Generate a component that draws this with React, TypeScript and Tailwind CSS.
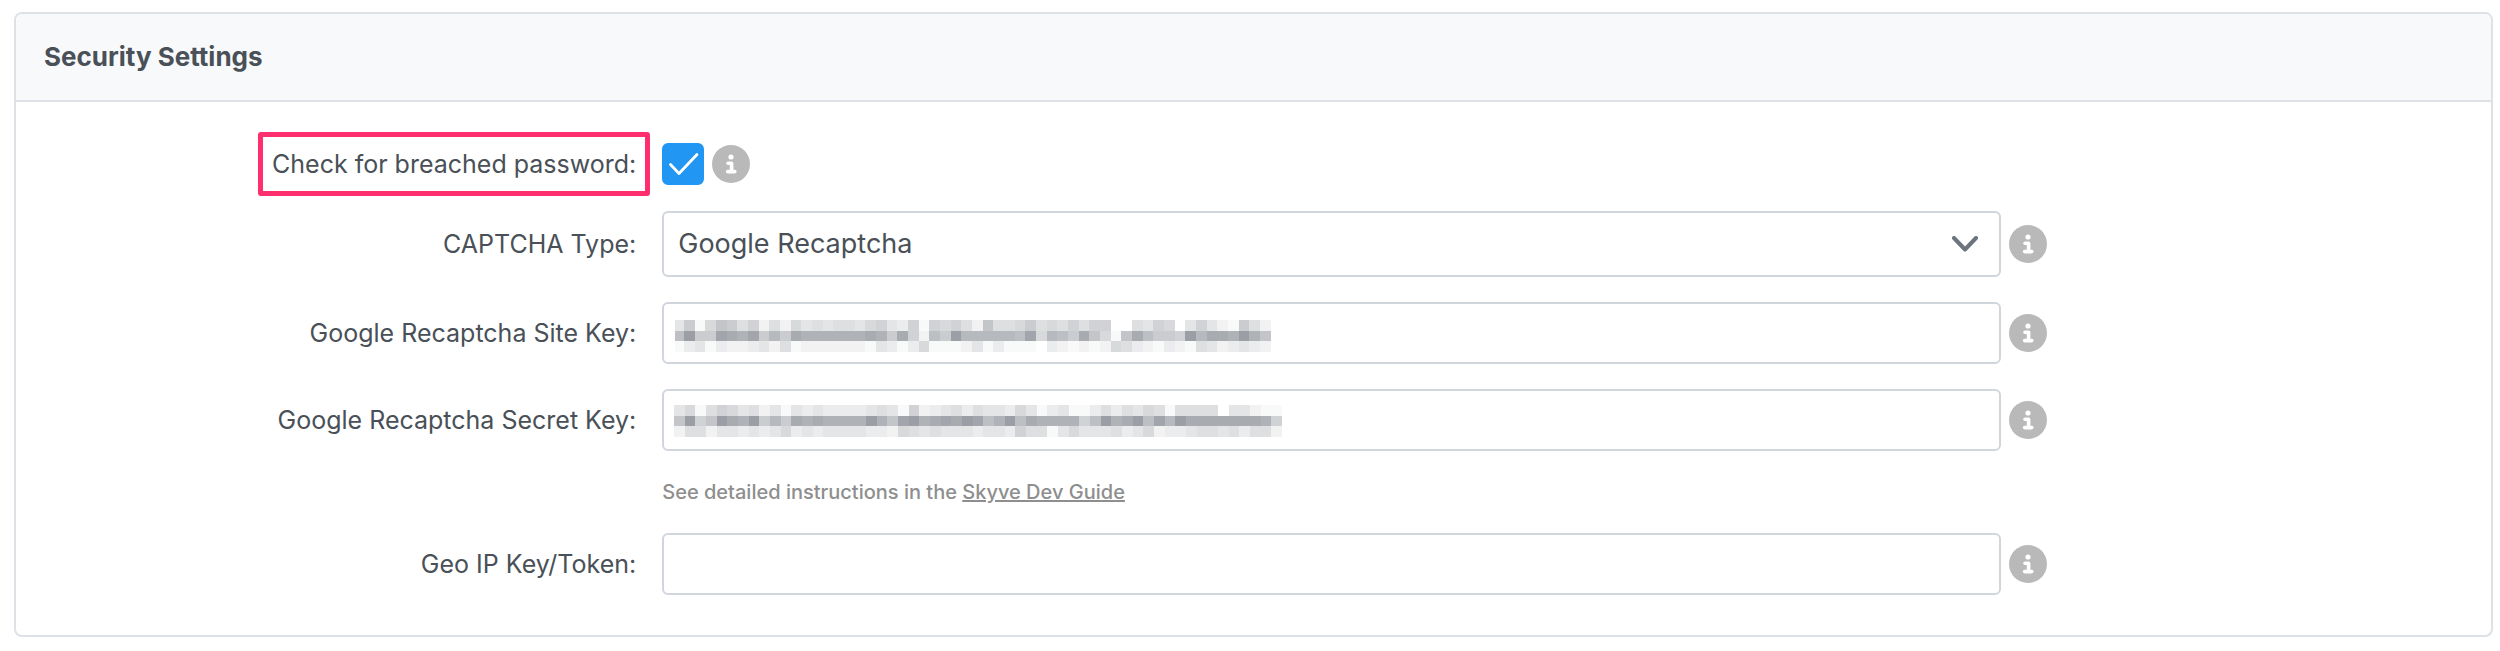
import { useState } from 'react'
import type { ReactNode } from 'react'

const CELL = 32 / 3

// One hex digit per cell: 0 is blank, f is the darkest
const SITE_KEY_MASK = [
  '48169857252645455467437176752955685657577005476047421852',
  'af88edce8b8dccccccdc8d72a8fbbbbbae6ba8d9619da887fbddcfc9',
  '13413223425122222214313611124131110321212653213215423432',
]

const SECRET_KEY_MASK = [
  '461576452414343333454172345354436413411353546515555044211',
  '9f79fdcf8b8dcdccccfc9efcdedfeacfadcccc7afcdfaebfdddddddc7',
  '255244343463434444332654544434437551464445346233455453552',
]

interface MaskedValueProps {
  rows: string[]
  top: number
  firstCell: number
}

function MaskedValue({ rows, top, firstCell }: MaskedValueProps) {
  const width = firstCell + (rows[0].length - 1) * CELL
  return (
    <svg
      className="pointer-events-none absolute h-8"
      style={{ top, left: 22 - firstCell, width }}
      viewBox={`0 0 ${width} 32`}
      shapeRendering="crispEdges"
      aria-hidden="true"
    >
      {rows.map((row, y) =>
        row.split('').map((level, x) => (
          <rect
            key={`${x}-${y}`}
            x={x === 0 ? 0 : firstCell + (x - 1) * CELL}
            y={y * CELL}
            width={x === 0 ? firstCell : CELL}
            height={CELL}
            fill="#9b9fa5"
            fillOpacity={parseInt(level, 16) / 15}
          />
        ))
      )}
    </svg>
  )
}

function InfoButton({ label }: { label: string }) {
  return (
    <button type="button" aria-label={`About ${label}`} className="shrink-0">
      <svg className="size-[38px]" viewBox="0 0 38 38" fill="none" aria-hidden="true">
        <circle cx="19" cy="19" r="19" fill="#b9b9b9" />
        <circle cx="19" cy="12" r="2.6" fill="#fff" />
        <path
          d="M16 18.3h3.6v8.3M15.6 26.6h7.2"
          stroke="#fff"
          strokeWidth="3.6"
          strokeLinecap="round"
          strokeLinejoin="round"
        />
      </svg>
    </button>
  )
}

interface FieldRowProps {
  id: string
  label: string
  highlighted?: boolean
  children: ReactNode
}

function FieldRow({ id, label, highlighted, children }: FieldRowProps) {
  return (
    <div className="flex items-center gap-[26px]">
      <div className="flex w-1/4 justify-end">
        <label htmlFor={id} className="relative text-[25px] leading-8">
          {label}:
          {highlighted && (
            <span className="pointer-events-none absolute -inset-x-[14px] -inset-y-4 rounded-[3px] border-5 border-[#ff2e6c]" />
          )}
        </label>
      </div>
      <div className="flex w-[56%] items-center gap-2">
        {children}
        <InfoButton label={label} />
      </div>
    </div>
  )
}

const inputClass =
  'block h-[62px] w-full rounded-md border-2 border-[#d0d6dc] bg-white px-4 text-[27px] outline-none'

export default function App() {
  const [breachCheck, setBreachCheck] = useState(true)
  const [captchaType, setCaptchaType] = useState('Google Recaptcha')
  const [geoKey, setGeoKey] = useState('')

  return (
    <main className="bg-white pt-3 pr-[7px] pb-[14px] pl-[14px] font-[Inter,sans-serif] text-[#495057]">
      <section className="overflow-hidden rounded-lg border-2 border-[#dee2e6]">
        <header className="border-b-2 border-[#dee2e6] bg-[#f8f9fb] px-7 py-[27px]">
          <h2 className="text-[26px] leading-8 font-bold">Security Settings</h2>
        </header>

        <form className="flex flex-col gap-[25px] pt-10 pb-10 pl-0.5">
          <FieldRow id="breach-check" label="Check for breached password" highlighted>
            <div className="relative my-px size-[42px]">
              <input
                id="breach-check"
                type="checkbox"
                checked={breachCheck}
                onChange={(e) => setBreachCheck(e.target.checked)}
                className="block size-[42px] appearance-none rounded-md border-2 border-[#d0d6dc] bg-white checked:border-[#2196f3] checked:bg-[#2196f3]"
              />
              {breachCheck && (
                <svg
                  className="pointer-events-none absolute inset-0 size-[42px]"
                  viewBox="0 0 42 42"
                  fill="none"
                  aria-hidden="true"
                >
                  <path
                    d="M8.5 21.5 17 30.5 35 11.5"
                    stroke="#fff"
                    strokeWidth="2.8"
                    strokeLinecap="round"
                    strokeLinejoin="round"
                  />
                </svg>
              )}
            </div>
          </FieldRow>

          <FieldRow id="captcha-type" label="CAPTCHA Type">
            <div className="relative flex-1">
              <select
                id="captcha-type"
                value={captchaType}
                onChange={(e) => setCaptchaType(e.target.value)}
                className="block h-[66px] w-full appearance-none rounded-md border-2 border-[#d0d6dc] bg-white pr-16 pl-[14px] text-[27px] outline-none"
              >
                <option>Google Recaptcha</option>
              </select>
              <svg
                className="pointer-events-none absolute inset-y-0 right-[22px] my-auto h-4 w-[28px]"
                viewBox="0 0 28 16"
                fill="none"
                aria-hidden="true"
              >
                <path
                  d="M3 2 14 13.5 25 2"
                  stroke="#6c757d"
                  strokeWidth="4"
                  strokeLinecap="round"
                  strokeLinejoin="round"
                />
              </svg>
            </div>
          </FieldRow>

          <FieldRow id="site-key" label="Google Recaptcha Site Key">
            <div className="relative flex-1">
              <input id="site-key" type="text" className={inputClass} />
              <MaskedValue rows={SITE_KEY_MASK} top={18} firstCell={9} />
            </div>
          </FieldRow>

          <FieldRow id="secret-key" label="Google Recaptcha Secret Key">
            <div className="relative flex-1">
              <input id="secret-key" type="text" className={inputClass} />
              <MaskedValue rows={SECRET_KEY_MASK} top={16} firstCell={CELL} />
            </div>
          </FieldRow>

          <div className="flex gap-[26px]">
            <div className="w-1/4" />
            <p className="text-xl leading-8 font-medium text-[#8e8e8e]">
              See detailed instructions in the{' '}
              <a href="#dev-guide" className="underline">
                Skyve Dev Guide
              </a>
            </p>
          </div>

          <FieldRow id="geo-ip-key" label="Geo IP Key/Token">
            <div className="relative flex-1">
              <input
                id="geo-ip-key"
                type="text"
                value={geoKey}
                onChange={(e) => setGeoKey(e.target.value)}
                className={inputClass}
              />
            </div>
          </FieldRow>
        </form>
      </section>
    </main>
  )
}
